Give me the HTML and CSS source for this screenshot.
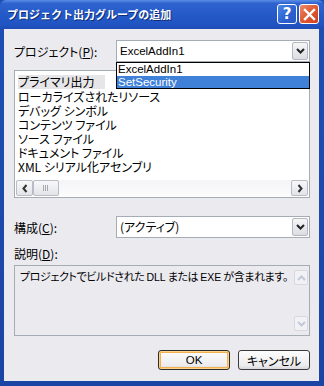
FILE: index.html
```html
<!DOCTYPE html>
<html lang="ja">
<head>
<meta charset="utf-8">
<link rel="stylesheet" href="styles.css">
</head>
<body>
<div class="window">
  <div class="titlebar">
    <span class="title">プロジェクト出力グループの追加</span>
    <div class="tbtns">
      <span class="tbtn help">?</span>
      <span class="tbtn close"><svg width="13" height="13" viewBox="0 0 13 13"><path d="M2 2 L11 11 M11 2 L2 11" stroke="#fff" stroke-width="2.4" stroke-linecap="square"/></svg></span>
    </div>
  </div>
  <div class="client">
    <div class="row row-project">
      <label class="lbl">プロジェクト(<u>P</u>):</label>
      <div class="combo">
        <span class="combo-text latin">ExcelAddIn1</span>
        <span class="drop"><svg width="9" height="6" viewBox="0 0 9 6"><path d="M1 1 L4.5 4.5 L8 1" fill="none" stroke="#222" stroke-width="2"/></svg></span>
      </div>
      <div class="droplist latin">
        <div class="ditem">ExcelAddIn1</div>
        <div class="ditem sel">SetSecurity</div>
      </div>
    </div>

    <div class="listbox">
      <div class="items">
        <div class="item isel">プライマリ出力</div>
        <div class="item">ローカライズされたリソース</div>
        <div class="item">デバッグ シンボル</div>
        <div class="item">コンテンツ ファイル</div>
        <div class="item">ソース ファイル</div>
        <div class="item">ドキュメント ファイル</div>
        <div class="item">XML シリアル化アセンブリ</div>
      </div>
      <div class="hscroll">
        <span class="sbtn"><svg width="6" height="9" viewBox="0 0 6 9"><path d="M4.5 1 L1.5 4.5 L4.5 8" fill="none" stroke="#333" stroke-width="2"/></svg></span>
        <span class="thumb"><svg width="8" height="6" viewBox="0 0 8 6"><path d="M1.5 0v6M3.5 0v6M5.5 0v6" stroke="#a9a9ad" stroke-width="1"/></svg></span>
        <span class="track"></span>
        <span class="sbtn"><svg width="6" height="9" viewBox="0 0 6 9"><path d="M1.5 1 L4.5 4.5 L1.5 8" fill="none" stroke="#333" stroke-width="2"/></svg></span>
      </div>
    </div>

    <div class="row row-config">
      <label class="lbl">構成(<u>C</u>):</label>
      <div class="combo">
        <span class="combo-text">(アクティブ)</span>
        <span class="drop"><svg width="9" height="6" viewBox="0 0 9 6"><path d="M1 1 L4.5 4.5 L8 1" fill="none" stroke="#222" stroke-width="2"/></svg></span>
      </div>
    </div>

    <label class="lbl desc-lbl">説明(<u>D</u>):</label>
    <div class="descbox">
      <div class="desc-text">プロジェクトでビルドされた <span class="latin">DLL</span> または <span class="latin">EXE</span> が含まれます。</div>
      <div class="vscroll">
        <span class="vbtn"><svg width="9" height="6" viewBox="0 0 9 6"><path d="M1 5 L4.5 1.5 L8 5" fill="none" stroke="#c3c8d8" stroke-width="2"/></svg></span>
        <span class="vbtn"><svg width="9" height="6" viewBox="0 0 9 6"><path d="M1 1 L4.5 4.5 L8 1" fill="none" stroke="#c3c8d8" stroke-width="2"/></svg></span>
      </div>
    </div>

    <div class="buttons">
      <button class="btn default latin">OK</button>
      <button class="btn">キャンセル</button>
    </div>
  </div>
</div>
</body>
</html>
```

FILE: styles.css
```css
* { box-sizing: border-box; }
html, body { margin: 0; padding: 0; }
body {
  width: 324px;
  height: 386px;
  overflow: hidden;
  background: #1d4aa9;
  font-family: "Noto Sans CJK JP", sans-serif;
  font-size: 12px;
  color: #000;
  font-feature-settings: "palt";
}
.latin { font-family: "Liberation Sans", "DejaVu Sans", sans-serif; font-size: 11.5px; }
.window {
  width: 324px;
  height: 386px;
  display: flex;
  flex-direction: column;
  background: linear-gradient(#1f4fb4, #1a45a4);
  padding: 0 5px 5px 4px;
}
.titlebar {
  height: 29px;
  flex: none;
  margin: 0 -5px 0 -4px;
  padding: 0 5px 0 7px;
  display: flex;
  align-items: center;
  justify-content: space-between;
  background: linear-gradient(#5a8de6 0%, #2e63cf 12%, #2459c8 50%, #2054c2 85%, #1d4cb4 100%);
  border-radius: 6px 6px 0 0;
}
.title {
  color: #fff;
  font-weight: bold;
  font-size: 11px;
  font-feature-settings: normal;
  text-shadow: 1px 1px 0 #0f2e77;
  margin-top: -1px;
}
.tbtns { display: flex; gap: 2px; margin-top: -1px; }
.tbtn {
  width: 20px;
  height: 20px;
  border: 1px solid #fff;
  border-radius: 3px;
  display: flex;
  align-items: center;
  justify-content: center;
  color: #fff;
  font-family: "DejaVu Sans", sans-serif;
  font-weight: bold;
  font-size: 15px;
}
.help { background: linear-gradient(135deg, #4f87e6, #2a5fd0 60%, #2a58c2); }
.close { background: linear-gradient(135deg, #eb8a6c, #e05a32 50%, #cf4020); }
.client {
  flex: 1;
  background: #ebeaef;
  padding: 11px 9px 0 10px;
  display: flex;
  flex-direction: column;
  position: relative;
}
.row { display: flex; align-items: center; }
.lbl { width: 102px; flex: none; }
.lbl u { text-decoration: underline; }
.combo {
  flex: 1;
  height: 22px;
  background: #fff;
  border: 1px solid #a5acb5;
  display: flex;
  align-items: center;
  justify-content: space-between;
  padding: 0 1px 0 3px;
}
.combo-text { line-height: 18px; }
.drop {
  width: 16px;
  height: 18px;
  border: 1px solid #b4b7c0;
  border-radius: 2px;
  background: linear-gradient(#f6f6f8, #dcdde3);
  display: flex;
  align-items: center;
  justify-content: center;
}
.droplist {
  position: absolute;
  left: 112px;
  top: 33px;
  width: 194px;
  height: 27px;
  background: #fff;
  border: 1px solid #000;
  z-index: 2;
}
.ditem { height: 12.5px; line-height: 12px; padding-left: 1px; }
.ditem.sel { background: #3f80d8; color: #fff; }
.listbox {
  margin-top: 8px;
  height: 128px;
  background: #fff;
  border: 1px solid #a5acb5;
  display: flex;
  flex-direction: column;
  padding: 1px;
}
.items { flex: 1; padding: 1px 0 0 2px; }
.item { height: 14px; line-height: 14px; white-space: nowrap; }
.isel { display: inline-block; background: #e6e6e9; padding-right: 10px; }
.hscroll {
  height: 16px;
  display: flex;
  background: linear-gradient(#f5f5f7, #fbfbfc);
  flex: none;
}
.sbtn, .thumb, .vbtn {
  width: 17px;
  height: 16px;
  flex: none;
  border: 1px solid #b9bcc4;
  border-radius: 2px;
  background: linear-gradient(#f8f8fa, #e3e4e8);
  display: flex;
  align-items: center;
  justify-content: center;
}
.thumb { width: 26px; }
.track { flex: 1; }
.row-config { margin-top: 18px; }
.desc-lbl { margin-top: 9px; line-height: 14px; }
.descbox {
  margin-top: 4px;
  height: 71px;
  border: 1px solid #a5acb5;
  background: #ebeaef;
  display: flex;
  padding: 2px 1px 2px 5px;
}
.desc-text {
  flex: 1;
  line-height: 14px;
  padding-top: 1px;
  white-space: nowrap;
  font-size: 11px;
  letter-spacing: -0.4px;
}
.desc-text .latin { font-size: 10.5px; letter-spacing: 0; }
.vscroll {
  width: 14px;
  display: flex;
  flex-direction: column;
  justify-content: space-between;
  padding: 2px 0;
}
.vbtn { width: 14px; height: 15px; border-color: #d7d9e0; background: #f2f2f5; }
.buttons {
  margin-top: 14px;
  display: flex;
  justify-content: flex-end;
  gap: 8px;
}
.btn {
  width: 72px;
  height: 20px;
  border: 1px solid #3b3b3b;
  border-radius: 3px;
  background: linear-gradient(#fdfdfd, #ececee 80%, #d8d8dc);
  font-family: "Noto Sans CJK JP", sans-serif;
  font-size: 12px;
  font-feature-settings: "palt";
  padding: 0;
  color: #000;
}
.btn.default {
  box-shadow: inset 0 0 0 1px #fbd38a, inset 0 0 0 2px #f1b150;
  border-color: #2b2b2b;
  font-size: 11.5px;
  font-family: "Liberation Sans", sans-serif;
}
```
